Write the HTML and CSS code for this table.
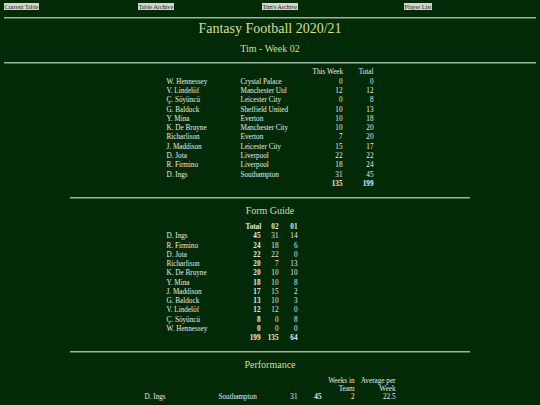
FILE: index.html
```html
<!DOCTYPE html>
<html>
<head>
<meta charset="utf-8">
<link rel="stylesheet" href="styles.css">
</head>
<body>
<nav class="nav">
  <span class="nav-cell"><a class="nav-link">Current Table</a></span>
  <span class="nav-cell"><a class="nav-link">Table Archive</a></span>
  <span class="nav-cell"><a class="nav-link">Tim's Archive</a></span>
  <span class="nav-cell"><a class="nav-link">Player List</a></span>
</nav>
<hr class="rule rule-full rule-nav">
<h1 class="title">Fantasy Football 2020/21</h1>
<h2 class="subtitle">Tim - Week 02</h2>
<hr class="rule rule-full rule-sub">

<table class="grid team">
  <colgroup><col class="c74"><col class="c72"><col class="c30"><col class="c31"></colgroup>
  <tr><td></td><td></td><td class="num">This Week</td><td class="num">Total</td></tr>
  <tr><td>W. Hennessey</td><td>Crystal Palace</td><td class="num">0</td><td class="num">0</td></tr>
  <tr><td>V. Lindelöf</td><td>Manchester Utd</td><td class="num">12</td><td class="num">12</td></tr>
  <tr><td>Ç. Söyüncü</td><td>Leicester City</td><td class="num">0</td><td class="num">8</td></tr>
  <tr><td>G. Baldock</td><td>Sheffield United</td><td class="num">10</td><td class="num">13</td></tr>
  <tr><td>Y. Mina</td><td>Everton</td><td class="num">10</td><td class="num">18</td></tr>
  <tr><td>K. De Bruyne</td><td>Manchester City</td><td class="num">10</td><td class="num">20</td></tr>
  <tr><td>Richarlison</td><td>Everton</td><td class="num">7</td><td class="num">20</td></tr>
  <tr><td>J. Maddison</td><td>Leicester City</td><td class="num">15</td><td class="num">17</td></tr>
  <tr><td>D. Jota</td><td>Liverpool</td><td class="num">22</td><td class="num">22</td></tr>
  <tr><td>R. Firmino</td><td>Liverpool</td><td class="num">18</td><td class="num">24</td></tr>
  <tr><td>D. Ings</td><td>Southampton</td><td class="num">31</td><td class="num">45</td></tr>
  <tr class="bold"><td></td><td></td><td class="num">135</td><td class="num">199</td></tr>
</table>

<hr class="rule rule-mid rule-a">
<h3 class="section">Form Guide</h3>

<div class="form-wrap">
<table class="grid form">
  <colgroup><col class="c79"><col class="c15"><col class="c18"><col class="c19"></colgroup>
  <tr class="bold"><td></td><td class="num">Total</td><td class="num">02</td><td class="num">01</td></tr>
  <tr><td>D. Ings</td><td class="num b">45</td><td class="num">31</td><td class="num">14</td></tr>
  <tr><td>R. Firmino</td><td class="num b">24</td><td class="num">18</td><td class="num">6</td></tr>
  <tr><td>D. Jota</td><td class="num b">22</td><td class="num">22</td><td class="num">0</td></tr>
  <tr><td>Richarlison</td><td class="num b">20</td><td class="num">7</td><td class="num">13</td></tr>
  <tr><td>K. De Bruyne</td><td class="num b">20</td><td class="num">10</td><td class="num">10</td></tr>
  <tr><td>Y. Mina</td><td class="num b">18</td><td class="num">10</td><td class="num">8</td></tr>
  <tr><td>J. Maddison</td><td class="num b">17</td><td class="num">15</td><td class="num">2</td></tr>
  <tr><td>G. Baldock</td><td class="num b">13</td><td class="num">10</td><td class="num">3</td></tr>
  <tr><td>V. Lindelöf</td><td class="num b">12</td><td class="num">12</td><td class="num">0</td></tr>
  <tr><td>Ç. Söyüncü</td><td class="num b">8</td><td class="num">0</td><td class="num">8</td></tr>
  <tr><td>W. Hennessey</td><td class="num b">0</td><td class="num">0</td><td class="num">0</td></tr>
  <tr class="bold"><td></td><td class="num">199</td><td class="num">135</td><td class="num">64</td></tr>
</table>
</div>

<hr class="rule rule-mid rule-b">
<h3 class="section">Performance</h3>

<table class="grid perf">
  <colgroup><col class="c74"><col class="c60"><col class="c19"><col class="c24"><col class="c33"><col class="c41"></colgroup>
  <tr class="head2"><td></td><td></td><td></td><td></td><td class="num">Weeks in Team</td><td class="num">Average per Week</td></tr>
  <tr><td>D. Ings</td><td>Southampton</td><td class="num">31</td><td class="num b">45</td><td class="num">2</td><td class="num">22.5</td></tr>
</table>
</body>
</html>
```
FILE: styles.css
```css
html, body {
  margin: 0;
  padding: 0;
}
body {
  background: #032a07;
  color: #e6eae4;
  font-family: "Liberation Serif", "Times New Roman", serif;
  font-size: 7.2px;
  overflow: hidden;
  height: 405px;
}
.nav {
  display: grid;
  grid-template-columns: 134px 124px 142px 1fr;
  padding-left: 4px;
  margin-top: 3px;
  height: 8px;
  line-height: 8px;
  font-size: 6.4px;
}
.nav-link {
  background: #d2d6d0;
  color: #1f2a1f;
  padding: 0 0.5px;
  letter-spacing: -0.1px;
}
.rule {
  border: 0;
  height: 0;
  border-top: 1px solid #9fb59d;
  border-bottom: 1px solid #4d6d4c;
  margin-bottom: 0;
}
.rule-full {
  margin-left: 4px;
  margin-right: 4px;
}
.rule-nav { margin-top: 6px; }
.rule-sub { margin-top: 7px; }
.rule-mid {
  width: 400px;
  margin-left: auto;
  margin-right: auto;
}
.rule-a { margin-top: 7.7px; }
.rule-b { margin-top: 7.4px; }
.title {
  margin: 2px 0 0;
  font-size: 14px;
  line-height: 16px;
  font-weight: normal;
  text-align: center;
  color: #d4df98;
}
.subtitle {
  margin: 6px 0 0;
  font-size: 10px;
  line-height: 12px;
  font-weight: normal;
  text-align: center;
  color: #d4df98;
}
.section {
  margin: 6px 0 0;
  font-size: 10px;
  line-height: 12px;
  font-weight: normal;
  text-align: center;
  color: #d4df98;
}
.grid {
  border-collapse: collapse;
  table-layout: fixed;
}
.grid td {
  padding: 0;
  height: 9.3px;
  line-height: 9.3px;
  white-space: nowrap;
  overflow: visible;
}
.num { text-align: right; }
.bold td, .b { font-weight: bold; }
.team {
  width: 207px;
  margin: 4.4px auto 0;
}
.form-wrap {
  width: 207px;
  margin: 6.3px auto 0;
}
.form { width: 131px; }
.form td { height: 9.25px; line-height: 9.25px; }
.perf {
  width: 251px;
  margin: 6px auto 0;
}
.perf .head2 td {
  white-space: normal;
  line-height: 8px;
  height: 16px;
  vertical-align: bottom;
}
.c74 { width: 74px; }
.c72 { width: 72px; }
.c30 { width: 30px; }
.c31 { width: 31px; }
.c79 { width: 79px; }
.c15 { width: 15px; }
.c18 { width: 18px; }
.c19 { width: 19px; }
.c60 { width: 60px; }
.c24 { width: 24px; }
.c33 { width: 33px; }
.c41 { width: 41px; }
```
